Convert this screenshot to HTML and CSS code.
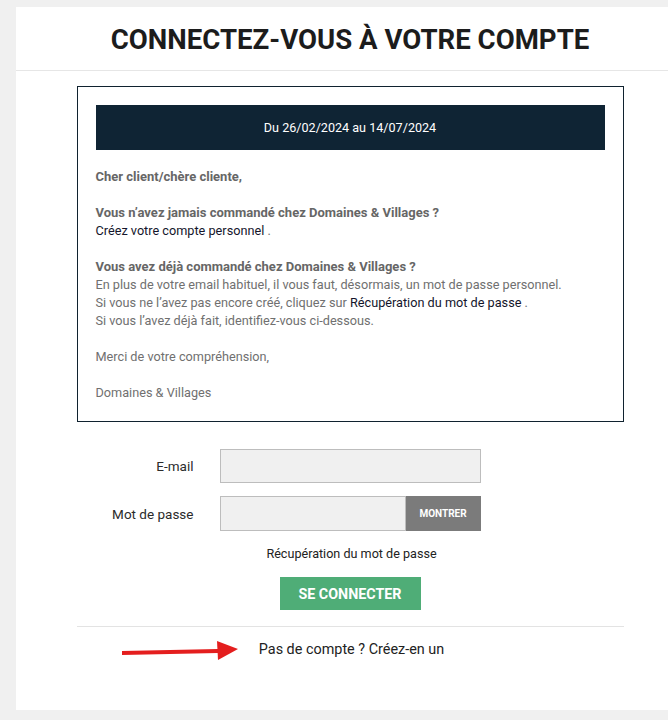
FILE: index.html
```html
<!DOCTYPE html>
<html lang="fr">
<head>
    <meta charset="UTF-8" />
    <title>Connexion</title>
    <link rel="stylesheet" href="styles.css">
</head>
<body>
    <div class="page">
        <!-- Titre -->
        <header class="page-header">
            <h1>CONNECTEZ-VOUS À VOTRE COMPTE</h1>
        </header>

        <main class="content">
            <!-- Message d'information -->
            <div class="notice">
                <div class="notice-banner">Du 26/02/2024 au 14/07/2024</div>
                <p><strong>Cher client/chère cliente,</strong></p>
                <p>
                    <strong>Vous n’avez jamais commandé chez Domaines &amp; Villages ?</strong><br>
                    <a href="#" class="dark-link">Créez votre compte personnel</a> .
                </p>
                <p>
                    <strong>Vous avez déjà commandé chez Domaines &amp; Villages ?</strong><br>
                    En plus de votre email habituel, il vous faut, désormais, un mot de passe personnel.<br>
                    Si vous ne l’avez pas encore créé, cliquez sur <a href="#" class="dark-link">Récupération du mot de passe</a> .<br>
                    Si vous l’avez déjà fait, identifiez-vous ci-dessous.
                </p>
                <p>Merci de votre compréhension,</p>
                <p>Domaines &amp; Villages</p>
            </div>

            <!-- Formulaire -->
            <form class="login-form">
                <label for="email">E-mail</label>
                <input type="email" id="email" name="email" />

                <label for="password">Mot de passe</label>
                <div class="password-field">
                    <input type="password" id="password" name="password" />
                    <button type="button" class="show-btn">MONTRER</button>
                </div>
            </form>

            <a href="#" class="forgot-link">Récupération du mot de passe</a>

            <div class="submit-row">
                <button type="submit" class="login-btn">SE CONNECTER</button>
            </div>

            <div class="signup-row">
                <svg class="arrow" width="122" height="24" viewBox="0 0 122 24">
                    <path d="M0 12 L96 10 L96 14 L0 16 Z" fill="#e41e1e" />
                    <path d="M95 2 L116 10 L96 21 Z" fill="#e41e1e" />
                </svg>
                <a href="#" class="signup-link">Pas de compte ? Créez-en un</a>
            </div>
        </main>
    </div>
</body>
</html>
```

FILE: styles.css
```css
html, body {
    overflow-x: hidden;
}

body {
    margin: 0;
    background-color: #f0f0f0;
    font-family: Roboto, "Liberation Sans", sans-serif;
    padding-top: 7px;
    padding-left: 16px;
    height: 720px;
    box-sizing: border-box;
}

.page {
    background-color: white;
    width: 668px;
    height: 703px;
}

.page-header {
    height: 63px;
    border-bottom: 1px solid #e6e6e6;
    display: flex;
    align-items: center;
    justify-content: center;
}

    .page-header h1 {
        margin: 0;
        font-size: 27.6px;
        font-weight: bold;
        color: #1c1c1c;
        padding-top: 2px;
    }

.content {
    width: 547px;
    margin: 15px auto 0;
}

.notice {
    border: 1px solid #10222f;
    padding: 18px 18px 19px;
    font-size: 12.7px;
    line-height: 18px;
    color: #707070;
}

    .notice p {
        margin: 18px 0 0;
    }

    .notice strong {
        color: #666;
        font-size: 13px;
    }

.notice-banner {
    background-color: #0f2434;
    color: white;
    height: 45px;
    display: flex;
    align-items: center;
    justify-content: center;
    font-size: 12.6px;
}

.dark-link {
    color: #14152b;
    text-decoration: none;
}

.login-form {
    display: grid;
    grid-template-columns: 117px 261px;
    column-gap: 26px;
    row-gap: 14px;
    align-items: center;
    margin-top: 27px;
}

    .login-form label {
        text-align: right;
        font-size: 13.5px;
        color: #2b2b2b;
    }

    .login-form input {
        height: 34px;
        box-sizing: border-box;
        border: 1px solid #bdbdbd;
        background-color: #f0f0f0;
        width: 100%;
        margin: 0;
    }

.password-field {
    display: flex;
    height: 35px;
    margin-top: -1px;
}

    .password-field input {
        flex: 1;
        height: 35px;
    }

.show-btn {
    width: 75px;
    border: none;
    background-color: #7b7b7b;
    color: white;
    font-family: Roboto, sans-serif;
    font-size: 10px;
    font-weight: bold;
    padding: 0;
}

.forgot-link {
    display: block;
    text-align: center;
    margin-top: 15px;
    font-size: 12.6px;
    color: #222;
    text-decoration: none;
    padding-left: 3px;
}

.submit-row {
    display: flex;
    justify-content: center;
    margin-top: 16px;
    padding-bottom: 16px;
    border-bottom: 1px solid #e3e3e3;
}

.login-btn {
    width: 141px;
    height: 33px;
    border: none;
    background-color: #4fad77;
    color: white;
    font-family: Roboto, sans-serif;
    font-size: 14.3px;
    font-weight: bold;
}

.signup-row {
    position: relative;
    text-align: center;
    margin-top: 12px;
    padding-left: 3px;
}

.signup-link {
    font-size: 14.4px;
    color: #222;
    text-decoration: none;
}

.arrow {
    position: absolute;
    left: 45px;
    top: 0;
}
```
